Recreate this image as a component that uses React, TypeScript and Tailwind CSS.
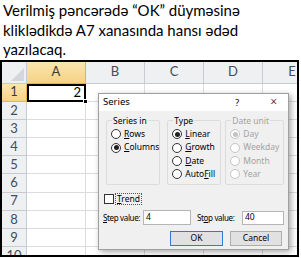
import React from "react";

const cols = ["A", "B", "C", "D", "E"];
const rows = [1, 2, 3, 4, 5, 6, 7, 8, 9, 10];

function Key({ text, k }: { text: string; k: number }) {
  return (
    <span className="whitespace-nowrap">
      {text.slice(0, k)}
      <span className="underline underline-offset-[1px]">{text[k]}</span>
      {text.slice(k + 1)}
    </span>
  );
}

function Radio({ checked, disabled }: { checked?: boolean; disabled?: boolean }) {
  return (
    <span
      className={`flex h-[10px] w-[10px] shrink-0 items-center justify-center rounded-full border bg-white ${
        disabled ? "border-[#c4c4c4]" : "border-[#333333]"
      }`}
    >
      {checked && (
        <span className={`h-[5px] w-[5px] rounded-full ${disabled ? "bg-[#c4c4c4]" : "bg-[#222222]"}`} />
      )}
    </span>
  );
}

function Option({
  label,
  k,
  checked,
  disabled,
}: {
  label: string;
  k: number;
  checked?: boolean;
  disabled?: boolean;
}) {
  return (
    <div className={`flex h-[13.4px] items-center gap-[3px] ${disabled ? "text-[#a3a3a3]" : "text-black"}`}>
      <Radio checked={checked} disabled={disabled} />
      {k < 0 ? <span>{label}</span> : <Key text={label} k={k} />}
    </div>
  );
}

function Group({
  title,
  width,
  disabled,
  children,
}: {
  title: string;
  width: string;
  disabled?: boolean;
  children: React.ReactNode;
}) {
  return (
    <fieldset className={`${width} h-[70px] rounded-[2px] border border-[#dcdcdc] pl-[4px] pt-[1px]`}>
      <legend className={`ml-[1px] px-[1px] leading-[12px] ${disabled ? "text-[#a3a3a3]" : "text-black"}`}>
        {title}
      </legend>
      <div className="flex flex-col">{children}</div>
    </fieldset>
  );
}

function SeriesDialog() {
  return (
    <div className="absolute left-[96px] top-[31px] flex h-[157px] w-[191px] flex-col border border-[#a0a0a0] bg-[#f0f0f0] font-['Noto_Sans',sans-serif] text-[8.5px] leading-none text-black shadow-[2px_2px_6px_rgba(0,0,0,0.35)]">
      <div className="flex h-[17px] items-center bg-white pl-[4px] pr-[11px]">
        <span className="text-[9.5px]">Series</span>
        <span className="ml-auto mr-[31px] text-[9px]">?</span>
        <span className="text-[12px] font-light">×</span>
      </div>
      <div className="flex gap-[7px] pl-[7px] pt-[4px]">
        <Group title="Series in" width="w-[54px]">
          <Option label="Rows" k={0} />
          <Option label="Columns" k={0} checked />
        </Group>
        <div className="flex gap-[4px]">
          <Group title="Type" width="w-[54px]">
            <Option label="Linear" k={0} checked />
            <Option label="Growth" k={0} />
            <Option label="Date" k={0} />
            <Option label="AutoFill" k={4} />
          </Group>
          <Group title="Date unit" width="w-[59px]" disabled>
            <Option label="Day" k={-1} checked disabled />
            <Option label="Weekday" k={-1} disabled />
            <Option label="Month" k={-1} disabled />
            <Option label="Year" k={-1} disabled />
          </Group>
        </div>
      </div>
      <div className="mt-[8px] flex items-center gap-[1px] pl-[5px]">
        <span className="h-[10px] w-[10px] border border-[#333333] bg-white" />
        <span className="border border-dotted border-[#555555] px-[1px] py-[1px]">
          <Key text="Trend" k={0} />
        </span>
      </div>
      <div className="mt-[5px] flex items-center pl-[4px]">
        <span className="w-[40px] text-[8px] tracking-[-0.35px]">
          <Key text="Step value:" k={0} />
        </span>
        <div className="flex h-[15px] w-[48px] items-center border border-[#b5b5b5] bg-white pl-[2px]">4</div>
        <span className="ml-[6px] w-[45px] text-[8px] tracking-[-0.35px]">
          <Key text="Stop value:" k={2} />
        </span>
        <div className="flex h-[14px] w-[42px] items-center border border-[#b5b5b5] bg-white pl-[2px]">40</div>
      </div>
      <div className="mt-[6px] flex gap-[7px] pl-[71px]">
        <div className="flex h-[15px] w-[53px] items-center justify-center border border-[#2f7ad8] bg-[#e1e1e1]">OK</div>
        <div className="flex h-[15px] w-[52px] items-center justify-center border border-[#adadad] bg-[#e1e1e1]">Cancel</div>
      </div>
    </div>
  );
}

function Sheet() {
  return (
    <div className="relative h-[197px] w-[299px] overflow-hidden border-2 border-black bg-white font-['Lato',sans-serif]">
      <div className="grid grid-cols-[25px_59px_59px_59px_59px_59px] grid-rows-[22px_repeat(10,18.2px)]">
        <div className="relative border-r border-b border-[#c6cbd1] bg-[#eef0f2]">
          <div className="absolute right-[2px] bottom-[2px] h-0 w-0 border-b-[13px] border-l-[13px] border-b-[#d3d6da] border-l-transparent" />
        </div>
        {cols.map((c, i) => (
          <div
            key={c}
            className={`flex items-center justify-center border-r border-b text-[13px] ${
              i === 0
                ? "border-[#e2b34f] bg-gradient-to-b from-[#fbe6ad] to-[#f6d284] text-[#3b3b3b]"
                : "border-[#c6cbd1] bg-[#eef0f2] text-[#3e4d60]"
            }`}
          >
            {c}
          </div>
        ))}
        {rows.map((r) => (
          <React.Fragment key={r}>
            <div
              className={`flex items-center justify-center border-r border-b text-[13px] ${
                r === 1
                  ? "border-[#e2b34f] bg-gradient-to-b from-[#fbe6ad] to-[#f6d284] text-[#3b3b3b]"
                  : "border-[#c6cbd1] bg-[#eef0f2] text-[#3e4d60]"
              }`}
            >
              {r}
            </div>
            {cols.map((c) =>
              r === 1 && c === "A" ? (
                <div
                  key={c}
                  className="relative flex items-center justify-end border-2 border-black pr-[3px] text-[13px] text-black"
                >
                  2
                  <span className="absolute -right-[4px] -bottom-[4px] h-[5px] w-[5px] border border-white bg-black" />
                </div>
              ) : (
                <div key={c} className="border-r border-b border-[#dadcdd]" />
              )
            )}
          </React.Fragment>
        ))}
      </div>
      <SeriesDialog />
    </div>
  );
}

export default function App() {
  return (
    <div className="h-[258px] w-[301px] bg-white">
      <p className="px-[3px] pt-[1px] font-['Lato',sans-serif] text-[15px] leading-[19.5px] text-black">
        Verilmiş pəncərədə “OK” düyməsinə
        <br />
        kliklədikdə A7 xanasında hansı ədəd
        <br />
        yazılacaq.
      </p>
      <Sheet />
    </div>
  );
}
